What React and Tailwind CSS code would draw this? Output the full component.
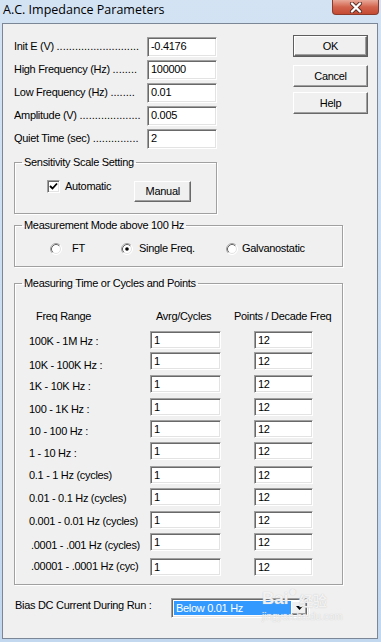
import React from 'react';

const sunken =
  'border border-t-[#a0a0a0] border-l-[#a0a0a0] border-b-white border-r-white shadow-[inset_1px_1px_0_#696969,inset_-1px_-1px_0_#e3e3e3] bg-white';
const raised =
  'border border-t-white border-l-white border-b-[#696969] border-r-[#696969] shadow-[inset_-1px_-1px_0_#a0a0a0] bg-[#f0f0f0]';

const Field = ({ value, className }) => (
  <div className={`${sunken} flex items-center pl-[3px] text-[11px] leading-none text-black ${className}`}>{value}</div>
);

const Button = ({ label, className, isDefault }) => (
  <div className={`${isDefault ? 'border border-[#5e5e5e]' : ''} ${className}`}>
    <div className={`${raised} w-full h-full flex items-center justify-center text-[11px]`}>{label}</div>
  </div>
);

const Radio = ({ checked }) => (
  <svg width="12" height="12" viewBox="0 0 12 12" className="shrink-0">
    <circle cx="6" cy="6" r="5.5" fill="white" stroke="#ffffff" />
    <circle cx="6" cy="6" r="4.5" fill="white" stroke="#e3e3e3" />
    <path d="M2.11 9.89 A5.5 5.5 0 0 1 9.89 2.11" fill="none" stroke="#a0a0a0" />
    <path d="M2.82 9.18 A4.5 4.5 0 0 1 9.18 2.82" fill="none" stroke="#696969" />
    {checked && <circle cx="6" cy="6" r="1.8" fill="#000" />}
  </svg>
);

const Group = ({ title, className, children }) => (
  <fieldset className={`border border-[#a0a0a0] shadow-[inset_1px_1px_0_#fff,1px_1px_0_#fff] ${className}`}>
    <legend className="ml-[7px] px-[2px] text-[11px] leading-[13px]">{title}</legend>
    {children}
  </fieldset>
);

const params = [
  { label: 'Init E (V)', dots: 27, value: '-0.4176' },
  { label: 'High Frequency (Hz)', dots: 8, value: '100000' },
  { label: 'Low Frequency (Hz)', dots: 8, value: '0.01' },
  { label: 'Amplitude (V)', dots: 20, value: '0.005' },
  { label: 'Quiet Time (sec)', dots: 15, value: '2' },
];

const rows = [
  { label: '100K - 1M Hz :', row: 'mt-[8px]', lab: 'mt-[4px]' },
  { label: '10K - 100K Hz :', row: 'mt-[3px]', lab: 'mt-[7px]' },
  { label: '1K - 10K Hz :', row: 'mt-[5px]', lab: 'mt-[5px]' },
  { label: '100 - 1K Hz :', row: 'mt-[5px]', lab: 'mt-[5px]' },
  { label: '10 - 100 Hz :', row: 'mt-[4px]', lab: 'mt-[5px]' },
  { label: '1 - 10 Hz :', row: 'mt-[4px]', lab: 'mt-[5px]' },
  { label: '0.1 - 1 Hz (cycles)', row: 'mt-[6px]', lab: 'mt-[3px]' },
  { label: '0.01 - 0.1 Hz (cycles)', row: 'mt-[4px]', lab: 'mt-[4px]' },
  { label: '0.001 - 0.01 Hz (cycles)', row: 'mt-[5px]', lab: 'mt-[4px]' },
  { label: '.0001 - .001 Hz (cycles)', row: 'mt-[4px]', lab: 'mt-[6px] pl-[2px]' },
  { label: '.00001 - .0001 Hz (cyc)', row: 'mt-[7px]', lab: 'mt-[2px] pl-[2px]' },
];

export default function App() {
  return (
    <div className="relative w-[381px] h-[642px] overflow-hidden bg-gradient-to-b from-[#d3e3f4] to-[#c2d8ef] font-['Liberation_Sans',Arial,sans-serif] text-black tracking-[-0.3px]">
      {/* title bar */}
      <div className="flex h-[23px] items-start">
        <span className="pl-[3px] pt-[2px] text-[12.5px] leading-[16px] tracking-normal font-['Open_Sans',sans-serif] text-black">
          A.C. Impedance Parameters
        </span>
        <div className="ml-auto mr-[2px] w-[47px] h-[15px] rounded-b-[4px] border border-t-0 border-[#8b3a2c] bg-gradient-to-b from-[#e8a898] via-[#d2634d] to-[#c44a33] flex items-center justify-center">
          <svg width="14" height="11" viewBox="0 0 14 11">
            <path d="M3 1.5 L11 9.5 M11 1.5 L3 9.5" stroke="#5a2a22" strokeWidth="4" strokeLinecap="round" />
            <path d="M3 1.5 L11 9.5 M11 1.5 L3 9.5" stroke="#ffffff" strokeWidth="2.4" strokeLinecap="round" />
          </svg>
        </div>
      </div>

      {/* client area */}
      <div className="ml-[2px] w-[376px] h-[616px] border border-[#7b8796] bg-[#f0f0f0] flex flex-col">
        <div className="flex mt-[11px]">
          <div className="pl-[11px] flex flex-col">
            {params.map(p => (
              <div key={p.label} className="flex items-center h-[23px]">
                <div className="w-[128px] mr-[5px] overflow-hidden whitespace-nowrap text-[11px] leading-[13px]">
                  {p.label}{' '}
                  <span className="tracking-normal">{'.'.repeat(p.dots)}</span>
                </div>
                <Field value={p.value} className="w-[70px] h-[20px]" />
              </div>
            ))}
          </div>
          <div className="ml-[76px] flex flex-col">
            <Button label="OK" isDefault className="w-[75px] h-[22px]" />
            <Button label="Cancel" className="w-[75px] h-[22px] mt-[8px]" />
            <Button label="Help" className="w-[75px] h-[22px] mt-[5px]" />
          </div>
        </div>

        <Group title="Sensitivity Scale Setting" className="ml-[11px] mt-[6px] w-[203px] h-[58px]">
          <div className="flex items-start pl-[32px] pt-[11px]">
            <div className={`${sunken} w-[13px] h-[13px] flex items-center justify-center`}>
              <svg width="9" height="9" viewBox="0 0 9 9">
                <path d="M1 4 L3.5 6.5 L8 1.5" fill="none" stroke="#000" strokeWidth="1.8" />
              </svg>
            </div>
            <span className="ml-[5px] text-[11px] leading-[13px]">Automatic</span>
            <Button label="Manual" className="ml-[23px] mt-[1px] w-[57px] h-[21px]" />
          </div>
        </Group>

        <Group title="Measurement Mode above 100 Hz" className="ml-[11px] mt-[5px] w-[329px] h-[48px]">
          <div className="flex items-center h-[13px] mt-[10px] pl-[35px] text-[11px] leading-[13px]">
            <div className="flex items-center w-[71px]">
              <Radio />
              <span className="ml-[10px]">FT</span>
            </div>
            <div className="flex items-center w-[105px]">
              <Radio checked />
              <span className="ml-[6px]">Single Freq.</span>
            </div>
            <div className="flex items-center">
              <Radio />
              <span className="ml-[4px]">Galvanostatic</span>
            </div>
          </div>
        </Group>

        <Group title="Measuring Time or Cycles and Points" className="ml-[11px] mt-[10px] w-[329px] h-[308px]">
          <div className="flex pt-[20px] pl-[21px] text-[11px] leading-[13px]">
            <span className="w-[120px]">Freq Range</span>
            <span className="w-[78px]">Avrg/Cycles</span>
            <span>Points / Decade Freq</span>
          </div>
          <div className="flex flex-col pl-[14px]">
            {rows.map(r => (
              <div key={r.label} className={`flex items-start h-[18px] ${r.row}`}>
                <span className={`w-[121px] whitespace-nowrap text-[11px] leading-[13px] ${r.lab}`}>{r.label}</span>
                <Field value="1" className="w-[71px] h-[18px]" />
                <Field value="12" className="ml-[33px] w-[59px] h-[18px]" />
              </div>
            ))}
          </div>
        </Group>

        <div className="flex items-start mt-[13px] pl-[12px]">
          <span className="w-[156px] mt-[1px] text-[11px] leading-[13px]">Bias DC Current During Run :</span>
          <div className={`${sunken} w-[139px] h-[20px] flex items-center p-[2px]`}>
            <div className="flex-1 h-full bg-[#3399ff] text-white text-[11px] leading-none flex items-center pl-[2px]">
              Below 0.01 Hz
            </div>
            <div className={`${raised} w-[16px] h-full flex items-center justify-center`}>
              <svg width="7" height="4" viewBox="0 0 7 4">
                <path d="M0 0 H7 L3.5 4 Z" fill="#000" />
              </svg>
            </div>
          </div>
        </div>
      </div>

      {/* watermark overlay */}
      <div className="absolute left-[262px] top-[584px] flex flex-col text-white/80 tracking-normal [text-shadow:0_0_1px_#b8b8b8] pointer-events-none">
        <div className="flex items-end">
          <span className="text-[17px] font-bold leading-[18px] font-['Liberation_Sans',sans-serif]">Bai</span>
          <span className="text-[14px] leading-[14px] mb-[10px]">●</span>
          <span className="text-[14px] font-bold leading-[16px] ml-[2px] font-['Noto_Sans_CJK_SC',sans-serif]">经验</span>
        </div>
        <span className="text-[10px] leading-[12px] mt-[3px]">jingyan.baidu.com</span>
      </div>
    </div>
  );
}
